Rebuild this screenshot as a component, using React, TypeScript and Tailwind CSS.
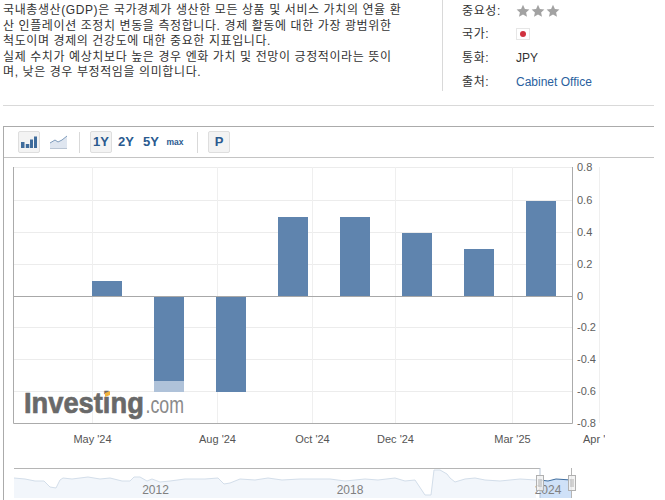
import React from "react";

const FONT = '"Liberation Sans", "Noto Sans CJK KR", sans-serif';

const bars = [
  { x: 92, y: 281, h: 16 },
  { x: 154, y: 297, h: 84 },
  { x: 216, y: 297, h: 95 },
  { x: 278, y: 217, h: 80 },
  { x: 340, y: 217, h: 80 },
  { x: 402, y: 233, h: 64 },
  { x: 464, y: 249, h: 48 },
  { x: 526, y: 201, h: 96 },
];

const yTicks = [
  { label: "0.8", y: 167 },
  { label: "0.6", y: 200 },
  { label: "0.4", y: 232 },
  { label: "0.2", y: 264 },
  { label: "0", y: 296 },
  { label: "-0.2", y: 327 },
  { label: "-0.4", y: 359 },
  { label: "-0.6", y: 391 },
  { label: "-0.8", y: 423 },
];

const xTicks = [
  { label: "May '24", x: 92.5 },
  { label: "Aug '24", x: 217.5 },
  { label: "Oct '24", x: 312.5 },
  { label: "Dec '24", x: 395.5 },
  { label: "Mar '25", x: 512.5 },
];

const navLine =
  "M14 478 L25 479 L35 481 L44 481 L50 487 L56 488 L60 480 L63 478 L72 479 L80 478 L88 477 L100 479 L110 478 L122 481 L130 481 L134 477 L140 477 L147 481 L152 479 L160 482 L170 481 L185 479 L205 479 L218 478 L224 484 L230 483 L240 479 L255 480 L268 478 L282 480 L300 479 L330 479 L345 481 L365 479 L378 480 L395 478 L405 481 L415 480 L425 495 L431 495 L434 470 L440 470 L447 474 L450 478 L455 482 L465 479 L475 478 L485 480 L500 481 L520 479 L536 480";

function Star() {
  return (
    <svg width="14" height="14" viewBox="0 0 14 14">
      <path d="M7 .8l1.9 4.1 4.5.5-3.3 3 .9 4.4L7 10.6l-4 2.2.9-4.4-3.3-3 4.5-.5z" fill="#a2a2a2" />
    </svg>
  );
}

function DetailRow({ label, children }: { label: string; children: React.ReactNode }) {
  return (
    <div className="flex h-[23.6px] items-center">
      <span className="w-[54px] tracking-[0.6px] text-[#333]">{label}</span>
      {children}
    </div>
  );
}

function ToolButton({ active, className, children }: { active?: boolean; className?: string; children: React.ReactNode }) {
  return (
    <div
      className={`flex h-[22px] items-center justify-center rounded-[2px] border font-bold text-[#2a5a8f] ${
        active ? "border-[#dedede] bg-[#f3f3f3]" : "border-transparent"
      } ${className ?? ""}`}
    >
      {children}
    </div>
  );
}

export default function App() {
  return (
    <div className="h-[500px] w-[665px] overflow-hidden bg-white text-[12px] text-[#333]" style={{ fontFamily: FONT }}>
      {/* 상단 설명 + 상세 정보 */}
      <div className="ml-[3px] mr-[11px] box-content flex h-[105px] border-b border-[#d9d9d9]">
        <div className="w-[439px] pt-[3px] leading-[15.5px] tracking-[0.6px]">
          <p>국내총생산(GDP)은 국가경제가 생산한 모든 상품 및 서비스 가치의 연율 환</p>
          <p>산 인플레이션 조정치 변동을 측정합니다. 경제 활동에 대한 가장 광범위한</p>
          <p>척도이며 경제의 건강도에 대한 중요한 지표입니다.</p>
          <p>실제 수치가 예상치보다 높은 경우 엔화 가치 및 전망이 긍정적이라는 뜻이</p>
          <p>며, 낮은 경우 부정적임을 의미합니다.</p>
        </div>
        <div className="h-[91px] border-l border-[#d9d9d9] pl-[19px]">
          <div className="-mt-[1px]">
            <DetailRow label="중요성:">
              <div className="flex gap-[1px]">
                <Star />
                <Star />
                <Star />
              </div>
            </DetailRow>
            <DetailRow label="국가:">
              <div className="flex h-[12px] w-[14px] items-center justify-center border border-[#e6e6e6] bg-white">
                <div className="h-[6px] w-[6px] rounded-full bg-[#d0313f]" />
              </div>
            </DetailRow>
            <DetailRow label="통화:">
              <span>JPY</span>
            </DetailRow>
            <DetailRow label="출처:">
              <span className="text-[#2a5f9e]">Cabinet Office</span>
            </DetailRow>
          </div>
        </div>
      </div>

      {/* 차트 패널 */}
      <div className="ml-[3px] mr-[11px] mt-[20px] h-[374px] border-l border-t border-[#ababab]">
        <div className="flex h-[31px] items-center border-b border-[#c4c4c4] pl-[14px] text-[13px]">
          <ToolButton active className="w-[22px]">
            <svg width="16" height="14" viewBox="0 0 16 14">
              <path d="M0 7h3.5v6H0zM4.8 9h3.5v4H4.8zM9 4.5h3v8.5H9zM13 1.5h3V13h-3z" fill="#3f6c9c" />
            </svg>
          </ToolButton>
          <div className="ml-[10px] flex w-[18px] justify-center">
            <svg width="18" height="14" viewBox="0 0 18 14">
              <path d="M0 8l5-3 3 2 4-2 5-4v12H0z" fill="#dfe6f0" />
              <path d="M0 8l5-3 3 2 4-2 5-4" fill="none" stroke="#7f9cbc" strokeWidth="1" />
              <path d="M0 13.5h17" stroke="#b9c5d4" strokeWidth="1" />
            </svg>
          </div>
          <div className="ml-[11px] h-[21px] w-[1px] bg-[#d9d9d9]" />
          <ToolButton active className="ml-[10px] w-[22px]">
            1Y
          </ToolButton>
          <ToolButton className="ml-[5px] w-[18px]">2Y</ToolButton>
          <ToolButton className="ml-[7px] w-[18px]">5Y</ToolButton>
          <ToolButton className="ml-[6px] w-[18px] text-[8.5px]">max</ToolButton>
          <div className="ml-[13px] h-[21px] w-[1px] bg-[#d9d9d9]" />
          <ToolButton active className="ml-[10px] w-[22px]">
            P
          </ToolButton>
        </div>

        {/* svg 좌표는 페이지 기준과 맞추기 위해 viewBox로 옮김 */}
        <svg className="block" width="651" height="342" viewBox="4 158 651 342" style={{ fontFamily: FONT }}>
          {/* grid */}
          {yTicks.slice(0, 8).map((t) => (
            <path key={t.y} d={`M14 ${t.y + 0.5}H572`} stroke="#ececec" strokeWidth="1" />
          ))}
          {[92.5, 217.5, 312.5, 395.5, 512.5].map((x) => (
            <path key={x} d={`M${x} 167V423`} stroke="#efefef" strokeWidth="1" />
          ))}
          <path d="M599.5 167V423" stroke="#efefef" strokeWidth="1" />
          {/* bars */}
          {bars.map((b) => (
            <rect key={b.x} x={b.x} y={b.y} width="30" height={b.h} fill="#5f84ae" />
          ))}
          <rect x="154" y="381" width="30" height="11" fill="#afc2d9" />
          {/* axes */}
          <path d="M13.5 167V423.5H572.5V167" fill="none" stroke="#ababab" strokeWidth="1" />
          <path d="M14 296.5H572" stroke="#a8a8a8" strokeWidth="1" />
          {/* labels */}
          {yTicks.map((t) => (
            <text key={t.label} x="577" y={t.y + 4} fontSize="11" fill="#606060">
              {t.label}
            </text>
          ))}
          {xTicks.map((t) => (
            <text key={t.label} x={t.x} y="443" fontSize="11" fill="#555" textAnchor="middle">
              {t.label}
            </text>
          ))}
          <text x="583" y="443" fontSize="11" fill="#555">
            Apr &apos;
          </text>
          <rect x="605" y="432" width="20" height="16" fill="#fff" />
          {/* logo */}
          <text transform="translate(24 413) scale(0.91 1)" fontSize="30" fontWeight="700" fill="#696969" stroke="#696969" strokeWidth="0.7">
            Investing
          </text>
          <text transform="translate(145.5 413) scale(0.74 1)" fontSize="24" fill="#8a8a8a">
            .com
          </text>
          <path d="M105 393l5-2 0 4-5 2z" fill="#f2b33d" />
          {/* navigator */}
          <path d="M14 468.5H540" stroke="#b5b5b5" strokeWidth="1" />
          <path d={`${navLine} V498 H14 Z`} fill="#f2f6fb" />
          <path d={navLine} fill="none" stroke="#d3deea" strokeWidth="1" />
          <path d="M540 468V480 L548 481 L556 479 L571 480 V498 H540 Z" fill="#cfe1f8" />
          <path d="M540 468V480M540 498V480" stroke="#b5c3d4" strokeWidth="1" fill="none" />
          <path d="M540 480 L548 481 L556 479 L571 480" fill="none" stroke="#3e6d9e" strokeWidth="1" />
          <path d="M571.5 468V498" stroke="#b5b5b5" strokeWidth="1" />
          <text x="155.5" y="494" fontSize="12" fill="#808080" textAnchor="middle">
            2012
          </text>
          <text x="350" y="494" fontSize="12" fill="#808080" textAnchor="middle">
            2018
          </text>
          <text x="548" y="494" fontSize="12" fill="#808080" textAnchor="middle">
            2024
          </text>
          {[536.5, 568.5].map((x) => (
            <g key={x}>
              <rect x={x} y="475.5" width="7" height="15" fill="#f2f2f2" fillOpacity="0.85" stroke="#b0b0b0" strokeWidth="1" />
              <path d={`M${x + 2.5} 479V487M${x + 4.5} 479V487`} stroke="#b0b0b0" strokeWidth="1" />
            </g>
          ))}
        </svg>
      </div>
    </div>
  );
}
